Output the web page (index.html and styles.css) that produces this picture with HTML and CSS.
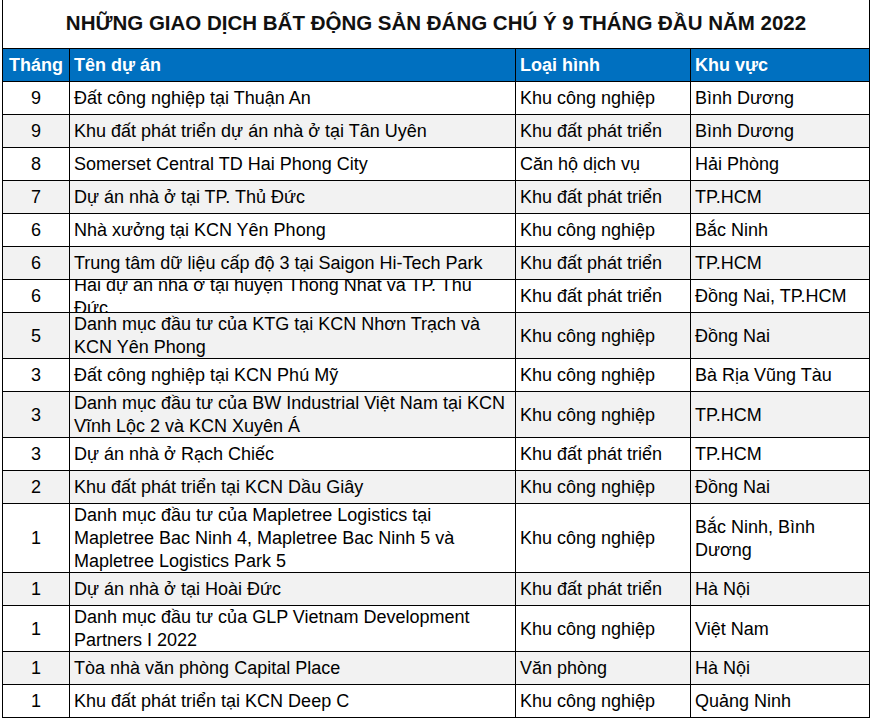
FILE: index.html
```html
<!DOCTYPE html>
<html lang="vi">
<head>
<meta charset="utf-8">
<title>Giao dịch BĐS 9 tháng 2022</title>
<link rel="stylesheet" href="styles.css">
</head>
<body>
<div class="sheet">
  <div class="title">NHỮNG GIAO DỊCH BẤT ĐỘNG SẢN ĐÁNG CHÚ Ý 9 THÁNG ĐẦU NĂM 2022</div>
  <div class="row head">
    <div class="c num">Tháng</div><div class="c">Tên dự án</div><div class="c">Loại hình</div><div class="c">Khu vực</div>
  </div>
  <div class="row">
    <div class="c num">9</div><div class="c">Đất công nghiệp tại Thuận An</div><div class="c">Khu công nghiệp</div><div class="c">Bình Dương</div>
  </div>
  <div class="row alt">
    <div class="c num">9</div><div class="c">Khu đất phát triển dự án nhà ở tại Tân Uyên</div><div class="c">Khu đất phát triển</div><div class="c">Bình Dương</div>
  </div>
  <div class="row">
    <div class="c num">8</div><div class="c">Somerset Central TD Hai Phong City</div><div class="c">Căn hộ dịch vụ</div><div class="c">Hải Phòng</div>
  </div>
  <div class="row alt">
    <div class="c num">7</div><div class="c">Dự án nhà ở tại TP. Thủ Đức</div><div class="c">Khu đất phát triển</div><div class="c">TP.HCM</div>
  </div>
  <div class="row">
    <div class="c num">6</div><div class="c">Nhà xưởng tại KCN Yên Phong</div><div class="c">Khu công nghiệp</div><div class="c">Bắc Ninh</div>
  </div>
  <div class="row alt">
    <div class="c num">6</div><div class="c">Trung tâm dữ liệu cấp độ 3 tại Saigon Hi-Tech Park</div><div class="c">Khu đất phát triển</div><div class="c">TP.HCM</div>
  </div>
  <div class="row">
    <div class="c num">6</div><div class="c clip"><span>Hai dự án nhà ở tại huyện Thống Nhất và TP. Thủ<br>Đức</span></div><div class="c">Khu đất phát triển</div><div class="c">Đồng Nai, TP.HCM</div>
  </div>
  <div class="row alt r2">
    <div class="c num">5</div><div class="c">Danh mục đầu tư của KTG tại KCN Nhơn Trạch và KCN Yên Phong</div><div class="c">Khu công nghiệp</div><div class="c">Đồng Nai</div>
  </div>
  <div class="row">
    <div class="c num">3</div><div class="c">Đất công nghiệp tại KCN Phú Mỹ</div><div class="c">Khu công nghiệp</div><div class="c">Bà Rịa Vũng Tàu</div>
  </div>
  <div class="row alt r2">
    <div class="c num">3</div><div class="c">Danh mục đầu tư của BW Industrial Việt Nam tại KCN Vĩnh Lộc 2 và KCN Xuyên Á</div><div class="c">Khu công nghiệp</div><div class="c">TP.HCM</div>
  </div>
  <div class="row">
    <div class="c num">3</div><div class="c">Dự án nhà ở Rạch Chiếc</div><div class="c">Khu đất phát triển</div><div class="c">TP.HCM</div>
  </div>
  <div class="row alt">
    <div class="c num">2</div><div class="c">Khu đất phát triển tại KCN Dầu Giây</div><div class="c">Khu công nghiệp</div><div class="c">Đồng Nai</div>
  </div>
  <div class="row r3">
    <div class="c num">1</div><div class="c">Danh mục đầu tư của Mapletree Logistics tại Mapletree Bac Ninh 4, Mapletree Bac Ninh 5 và Mapletree Logistics Park 5</div><div class="c">Khu công nghiệp</div><div class="c">Bắc Ninh, Bình Dương</div>
  </div>
  <div class="row alt">
    <div class="c num">1</div><div class="c">Dự án nhà ở tại Hoài Đức</div><div class="c">Khu đất phát triển</div><div class="c">Hà Nội</div>
  </div>
  <div class="row r2">
    <div class="c num">1</div><div class="c">Danh mục đầu tư của GLP Vietnam Development Partners I 2022</div><div class="c">Khu công nghiệp</div><div class="c">Việt Nam</div>
  </div>
  <div class="row alt">
    <div class="c num">1</div><div class="c">Tòa nhà văn phòng Capital Place</div><div class="c">Văn phòng</div><div class="c">Hà Nội</div>
  </div>
  <div class="row">
    <div class="c num">1</div><div class="c">Khu đất phát triển tại KCN Deep C</div><div class="c">Khu công nghiệp</div><div class="c">Quảng Ninh</div>
  </div>
</div>
</body>
</html>
```
FILE: styles.css
```css
html, body {
  margin: 0;
  padding: 0;
  background: #ffffff;
}
body {
  font-family: "Liberation Sans", Arial, sans-serif;
  color: #000;
  width: 873px;
  height: 720px;
  overflow: hidden;
}
.sheet {
  margin-left: 2px;
  width: 868px;
  box-sizing: border-box;
  border-left: 1px solid #000;
  border-right: 1px solid #000;
}
.title {
  height: 49px;
  box-sizing: border-box;
  border-bottom: 1px solid #000;
  display: flex;
  align-items: center;
  justify-content: center;
  font-weight: bold;
  font-size: 20.5px;
  color: #111;
  padding-bottom: 3px;
}
.row {
  display: grid;
  grid-template-columns: 67px 446px 175px 178px;
  height: 33px;
  box-sizing: border-box;
  border-bottom: 1px solid #000;
  font-size: 18px;
  line-height: 23px;
}
.row.alt { background: #f2f2f2; }
.row.r2 { height: 46px; }
.row.r3 { height: 69px; }
.row.head {
  background: #0070c0;
  color: #fff;
  font-weight: bold;
}
.c {
  border-right: 1px solid #000;
  display: flex;
  align-items: center;
  padding: 1px 4px 0;
  overflow: hidden;
  min-width: 0;
}
.c:last-child { border-right: none; }
.c.num { justify-content: center; padding: 1px 0 0; }
.clip span { display: block; flex: none; width: 100%; }
```
